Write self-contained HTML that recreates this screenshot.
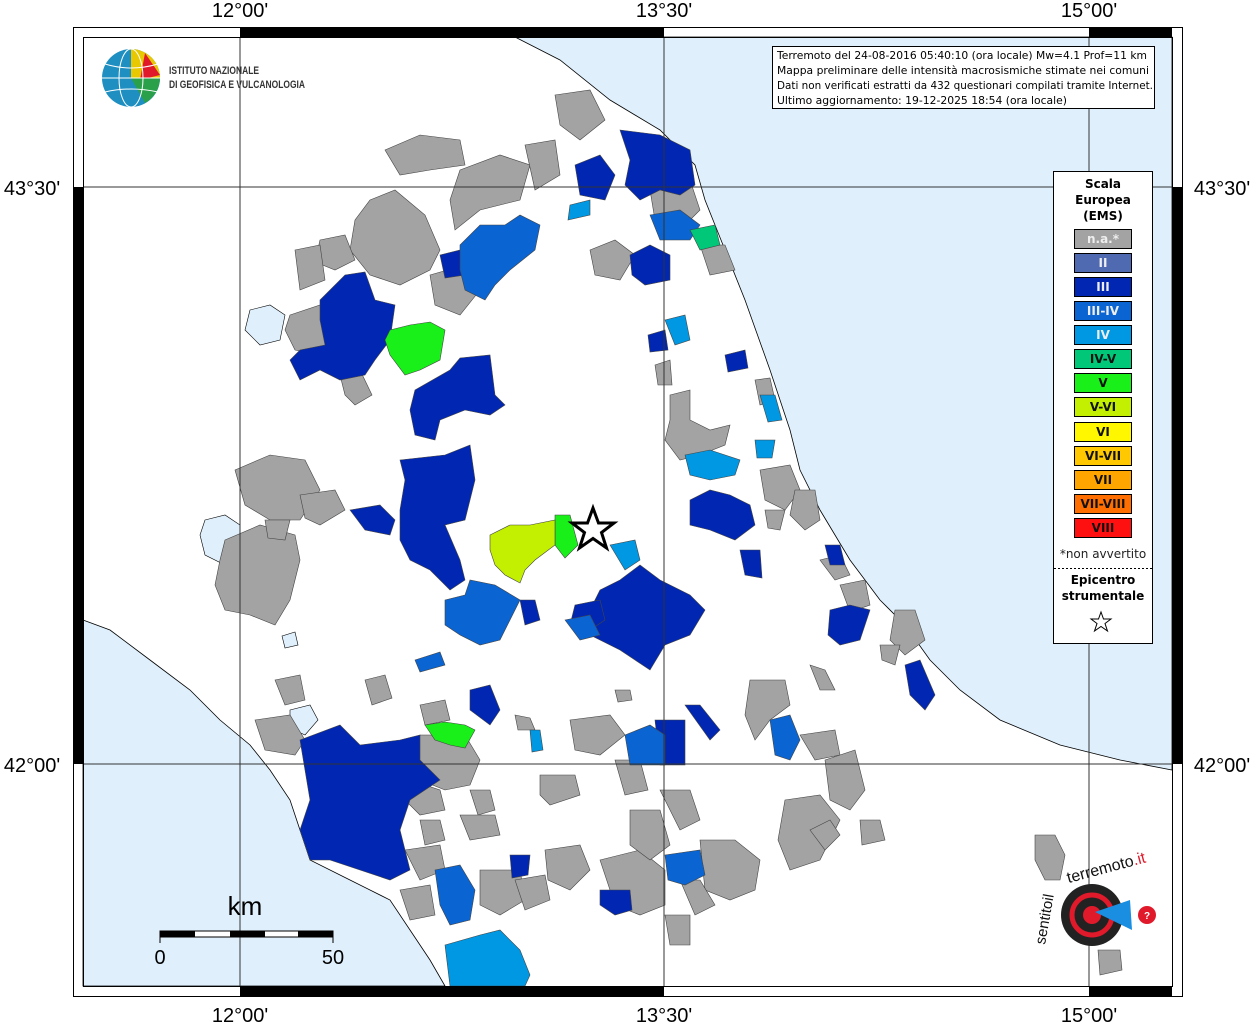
<!DOCTYPE html>
<html><head><meta charset="utf-8"><style>
html,body{margin:0;padding:0;background:#fff;}
body{width:1255px;height:1024px;position:relative;overflow:hidden;font-family:"Liberation Sans","DejaVu Sans",sans-serif;}
svg{position:absolute;left:0;top:0}
</style></head><body>
<svg width="1255" height="1024" viewBox="0 0 1255 1024" xmlns="http://www.w3.org/2000/svg">
<g font-family="Liberation Sans, DejaVu Sans, sans-serif">
<rect x="83" y="37" width="1089" height="949" fill="#fff"/>
<path d="M515,37 L560,60 L610,100 L660,130 L695,165 L705,200 L725,250 L745,300 L770,370 L790,430 L800,470 L820,510 L850,560 L880,600 L905,625 L930,660 L960,690 L1000,720 L1060,745 L1120,760 L1172,770 L1172,37 Z" fill="#dff0fc" stroke="#000" stroke-width="0.8"/>
<path d="M83,620 L110,630 L150,660 L190,690 L220,720 L250,745 L270,770 L290,800 L300,830 L310,860 L350,880 L390,900 L410,930 L430,960 L445,986 L83,986 Z" fill="#dff0fc" stroke="#000" stroke-width="0.8"/>
<path d="M250,310 L270,305 L285,315 L280,340 L260,345 L245,330 Z" fill="#dff0fc" stroke="#000" stroke-width="0.6"/>
<path d="M205,520 L225,515 L240,525 L240,555 L225,565 L205,555 L200,535 Z" fill="#dff0fc" stroke="#000" stroke-width="0.6"/>
<path d="M290,710 L310,705 L318,720 L305,735 L290,728 Z" fill="#dff0fc" stroke="#000" stroke-width="0.6"/>
<path d="M282,636 L295,632 L298,645 L285,648 Z" fill="#dff0fc" stroke="#000" stroke-width="0.6"/>

<g stroke="#444" stroke-width="0.6">
<g fill="#a3a3a3">
<path d="M555,95 L590,90 L605,120 L580,140 L560,125 Z"/>
<path d="M385,150 L420,135 L460,140 L465,165 L430,170 L400,175 Z"/>
<path d="M460,170 L500,155 L530,165 L520,200 L480,210 L455,230 L450,200 Z"/>
<path d="M525,145 L555,140 L560,175 L535,190 Z"/>
<path d="M370,200 L395,190 L425,215 L440,250 L430,270 L400,285 L370,275 L350,250 L355,220 Z"/>
<path d="M320,240 L345,235 L355,260 L335,270 L315,262 Z"/>
<path d="M295,250 L320,245 L325,280 L300,290 Z"/>
<path d="M290,315 L320,305 L335,330 L320,355 L295,350 L285,330 Z"/>
<path d="M430,275 L465,265 L480,290 L460,315 L435,305 Z"/>
<path d="M590,250 L615,240 L635,255 L620,280 L595,275 Z"/>
<path d="M650,190 L690,180 L700,210 L680,230 L655,220 Z"/>
<path d="M700,245 L725,245 L735,270 L710,275 Z"/>
<path d="M655,365 L670,360 L672,385 L658,385 Z"/>
<path d="M670,395 L690,390 L690,420 L710,430 L730,425 L725,445 L700,455 L680,460 L665,440 L670,420 Z"/>
<path d="M755,380 L770,378 L775,400 L760,405 Z"/>
<path d="M760,470 L790,465 L800,490 L785,510 L765,500 Z"/>
<path d="M795,490 L815,490 L820,520 L805,530 L790,515 Z"/>
<path d="M765,510 L785,510 L780,530 L768,528 Z"/>
<path d="M820,560 L840,555 L850,575 L835,580 Z"/>
<path d="M840,585 L865,580 L870,605 L850,612 Z"/>
<path d="M895,610 L915,610 L925,640 L905,655 L890,640 Z"/>
<path d="M880,645 L900,645 L895,665 L882,660 Z"/>
<path d="M810,665 L825,670 L835,690 L820,690 Z"/>
<path d="M750,680 L785,680 L790,705 L770,720 L755,740 L745,715 Z"/>
<path d="M800,735 L835,730 L840,755 L815,760 Z"/>
<path d="M825,760 L855,750 L865,790 L850,810 L830,800 Z"/>
<path d="M785,800 L820,795 L840,820 L820,860 L790,870 L778,840 Z"/>
<path d="M810,830 L830,820 L840,835 L825,850 Z"/>
<path d="M860,820 L880,820 L885,840 L862,845 Z"/>
<path d="M235,470 L270,455 L305,460 L320,490 L300,520 L270,520 L245,505 Z"/>
<path d="M300,495 L335,490 L345,510 L320,525 L305,518 Z"/>
<path d="M225,540 L260,525 L295,535 L300,560 L290,600 L275,625 L250,615 L225,610 L215,585 L220,560 Z"/>
<path d="M265,520 L290,520 L285,540 L268,538 Z"/>
<path d="M275,680 L300,675 L305,700 L285,705 Z"/>
<path d="M365,680 L385,675 L392,698 L372,705 Z"/>
<path d="M420,705 L445,700 L450,720 L425,725 Z"/>
<path d="M255,720 L290,715 L305,740 L295,755 L265,750 Z"/>
<path d="M420,735 L465,735 L480,760 L470,785 L445,790 L420,780 L415,755 Z"/>
<path d="M410,780 L440,790 L445,810 L420,815 L405,800 Z"/>
<path d="M470,790 L490,790 L495,810 L478,815 Z"/>
<path d="M460,815 L495,815 L500,835 L470,840 Z"/>
<path d="M420,820 L440,820 L445,840 L425,845 Z"/>
<path d="M405,850 L440,845 L445,870 L420,880 Z"/>
<path d="M480,870 L520,870 L525,900 L500,915 L480,905 Z"/>
<path d="M400,890 L430,885 L435,915 L410,920 Z"/>
<path d="M515,715 L530,718 L535,730 L518,730 Z"/>
<path d="M540,775 L575,775 L580,795 L550,805 L540,795 Z"/>
<path d="M570,720 L610,715 L625,735 L600,755 L575,750 Z"/>
<path d="M545,850 L580,845 L590,870 L570,890 L548,880 Z"/>
<path d="M515,880 L545,875 L550,900 L525,910 Z"/>
<path d="M600,860 L640,850 L665,870 L665,905 L640,915 L615,905 Z"/>
<path d="M630,810 L660,810 L670,845 L650,860 L630,845 Z"/>
<path d="M660,790 L690,790 L700,820 L680,830 Z"/>
<path d="M615,760 L640,760 L648,790 L625,795 Z"/>
<path d="M700,840 L735,840 L760,860 L755,890 L730,900 L705,890 Z"/>
<path d="M680,880 L700,880 L715,905 L695,915 Z"/>
<path d="M665,915 L690,915 L690,945 L670,945 Z"/>
<path d="M615,690 L630,690 L632,700 L618,702 Z"/>
<path d="M1035,835 L1055,835 L1065,855 L1060,880 L1045,880 L1035,860 Z"/>
<path d="M1098,950 L1120,950 L1122,970 L1100,975 Z"/>
<path d="M340,375 L360,370 L372,395 L355,405 L345,395 Z"/>
</g>
<g fill="#0026b2">
<path d="M320,300 L345,275 L365,272 L375,300 L395,305 L390,340 L375,360 L365,375 L340,380 L320,370 L300,380 L290,360 L300,350 L325,345 L320,320 Z"/>
<path d="M415,390 L450,370 L460,358 L490,355 L495,395 L505,405 L490,415 L465,410 L440,420 L435,440 L415,435 L410,410 Z"/>
<path d="M400,460 L445,455 L470,445 L475,480 L465,520 L445,525 L460,560 L465,580 L450,590 L430,570 L410,560 L400,540 L400,510 L405,480 Z"/>
<path d="M350,510 L380,505 L395,520 L390,535 L365,530 Z"/>
<path d="M600,590 L620,580 L640,565 L660,580 L690,595 L705,610 L690,635 L665,645 L650,670 L620,650 L600,640 L580,630 Z"/>
<path d="M575,605 L600,600 L605,620 L590,630 L570,625 Z"/>
<path d="M575,165 L600,155 L615,175 L605,200 L580,195 Z"/>
<path d="M620,130 L660,135 L690,150 L695,185 L680,195 L660,190 L640,200 L625,185 L630,160 Z"/>
<path d="M630,255 L650,245 L670,255 L670,280 L645,285 L632,275 Z"/>
<path d="M440,255 L460,250 L465,275 L445,278 Z"/>
<path d="M690,500 L710,490 L730,495 L750,505 L755,525 L735,540 L710,530 L690,525 Z"/>
<path d="M725,355 L745,350 L748,368 L728,372 Z"/>
<path d="M740,550 L760,550 L762,578 L745,575 Z"/>
<path d="M825,545 L840,545 L845,565 L830,565 Z"/>
<path d="M830,610 L850,605 L870,610 L860,640 L840,645 L828,635 Z"/>
<path d="M905,665 L920,660 L935,695 L925,710 L910,695 Z"/>
<path d="M470,690 L490,685 L500,710 L490,725 L470,710 Z"/>
<path d="M520,600 L535,600 L540,620 L525,625 Z"/>
<path d="M655,720 L685,720 L685,765 L660,765 Z"/>
<path d="M685,705 L700,705 L720,730 L710,740 Z"/>
<path d="M600,890 L630,890 L632,910 L615,915 L600,905 Z"/>
<path d="M510,855 L530,855 L528,875 L512,878 Z"/>
<path d="M300,740 L340,725 L360,745 L400,740 L420,735 L420,760 L440,780 L410,800 L400,830 L410,870 L390,880 L360,870 L330,860 L310,860 L300,830 L310,800 L305,770 Z"/>
<path d="M648,335 L665,330 L668,350 L650,352 Z"/>
</g>
<g fill="#0a64d2">
<path d="M460,245 L480,225 L505,225 L520,215 L540,225 L535,250 L510,270 L495,285 L485,300 L465,290 L460,270 Z"/>
<path d="M650,215 L680,210 L700,225 L690,240 L660,240 Z"/>
<path d="M445,600 L465,595 L470,580 L495,585 L520,600 L510,620 L500,640 L480,645 L460,635 L445,625 Z"/>
<path d="M565,620 L590,615 L600,635 L580,640 Z"/>
<path d="M625,735 L650,725 L665,735 L665,765 L630,765 Z"/>
<path d="M770,720 L790,715 L800,740 L790,760 L775,755 Z"/>
<path d="M665,855 L700,850 L705,875 L685,885 L668,880 Z"/>
<path d="M435,870 L460,865 L475,890 L470,920 L450,925 L440,905 Z"/>
<path d="M415,660 L440,652 L445,665 L420,672 Z"/>
</g>
<g fill="#0098e2">
<path d="M665,320 L685,315 L690,340 L675,345 Z"/>
<path d="M760,395 L775,395 L782,420 L768,422 Z"/>
<path d="M685,455 L710,450 L740,460 L735,475 L710,480 L690,475 Z"/>
<path d="M755,440 L775,440 L772,458 L757,458 Z"/>
<path d="M610,545 L635,540 L640,560 L625,570 Z"/>
<path d="M570,205 L590,200 L590,215 L568,220 Z"/>
<path d="M530,730 L540,730 L543,750 L532,752 Z"/>
<path d="M445,945 L480,935 L500,930 L520,950 L530,975 L525,986 L450,986 Z"/>
</g>
<path d="M690,230 L715,225 L720,245 L700,250 Z" fill="#00c878"/>
<path d="M390,330 L410,325 L430,322 L445,330 L440,360 L420,370 L405,375 L390,355 L385,340 Z" fill="#19f019"/>
<path d="M555,515 L570,515 L578,545 L565,558 L555,545 Z" fill="#19f019"/>
<path d="M425,725 L445,722 L465,725 L475,730 L465,748 L450,745 L435,740 Z" fill="#19f019"/>
<path d="M490,535 L510,525 L530,525 L555,520 L555,545 L535,560 L525,570 L520,583 L505,575 L495,565 L490,550 Z" fill="#c2f000"/>
</g>
<g stroke="#333" stroke-width="1" fill="none">
<line x1="240" y1="37" x2="240" y2="986"/><line x1="664" y1="37" x2="664" y2="986"/><line x1="1089" y1="37" x2="1089" y2="986"/>
<line x1="83" y1="187" x2="1172" y2="187"/><line x1="83" y1="764" x2="1172" y2="764"/>
</g>
<rect x="73.5" y="27.5" width="1109" height="969" fill="none" stroke="#000" stroke-width="1"/>
<rect x="83.5" y="37.5" width="1089" height="949" fill="none" stroke="#000" stroke-width="1"/>
<g fill="#000">
<rect x="240" y="27" width="424" height="10"/><rect x="1089" y="27" width="83" height="10"/>
<rect x="240" y="986" width="424" height="10"/><rect x="1089" y="986" width="83" height="10"/>
<rect x="73" y="187" width="10" height="577"/><rect x="1172" y="187" width="10" height="577"/>
</g>
<g font-size="20" fill="#000" text-anchor="middle">
<text x="240" y="17">12°00'</text><text x="664" y="17">13°30'</text><text x="1089" y="17">15°00'</text>
<text x="240" y="1022">12°00'</text><text x="664" y="1022">13°30'</text><text x="1089" y="1022">15°00'</text>
<text x="32" y="195">43°30'</text><text x="32" y="772">42°00'</text>
<text x="1222" y="195">43°30'</text><text x="1222" y="772">42°00'</text>
</g>
<circle cx="131" cy="78" r="29" fill="#1e8fc0"/>
<path d="M131,49 A29,29 0 0,1 160,78 L131,78 Z" fill="#e8c800"/>
<path d="M145,53 L160,75 L140,80 Z" fill="#e01a2a"/>
<path d="M131,78 L160,78 A29,29 0 0,1 145,103 Z" fill="#2aa04a"/>
<g stroke="#fff" stroke-width="1" fill="none"><ellipse cx="131" cy="78" rx="12" ry="29"/><line x1="102" y1="78" x2="160" y2="78"/><path d="M105,64 Q131,72 158,64"/><path d="M105,92 Q131,86 158,92"/></g>
<text x="169" y="74" font-size="11" fill="#333" textLength="90" lengthAdjust="spacingAndGlyphs" font-weight="bold">ISTITUTO NAZIONALE</text>
<text x="169" y="88" font-size="11" fill="#333" textLength="136" lengthAdjust="spacingAndGlyphs" font-weight="bold">DI GEOFISICA E VULCANOLOGIA</text>
<rect x="772.5" y="46.5" width="382" height="62" fill="#fff" stroke="#000"/>
<g font-size="11" fill="#000" font-family="DejaVu Sans, sans-serif">
<text x="777" y="59" textLength="370" lengthAdjust="spacingAndGlyphs">Terremoto del 24-08-2016 05:40:10 (ora locale) Mw=4.1 Prof=11 km</text>
<text x="777" y="74" textLength="372" lengthAdjust="spacingAndGlyphs">Mappa preliminare delle intensità macrosismiche stimate nei comuni</text>
<text x="777" y="89" textLength="376" lengthAdjust="spacingAndGlyphs">Dati non verificati estratti da 432 questionari compilati tramite Internet.</text>
<text x="777" y="104" textLength="290" lengthAdjust="spacingAndGlyphs">Ultimo aggiornamento: 19-12-2025 18:54 (ora locale)</text>
</g>
<rect x="1053.5" y="171.5" width="99" height="472" fill="#fff" stroke="#000"/>
<g font-size="12" font-weight="bold" text-anchor="middle" fill="#000" font-family="DejaVu Sans, sans-serif">
<text x="1103" y="188">Scala</text><text x="1103" y="204">Europea</text><text x="1103" y="220">(EMS)</text>
</g>
<g stroke="#000" stroke-width="1">
<rect x="1074.5" y="229.5" width="57" height="19" fill="#a3a3a3"/>
<rect x="1074.5" y="253.5" width="57" height="19" fill="#4f6ab0"/>
<rect x="1074.5" y="277.5" width="57" height="19" fill="#0026b2"/>
<rect x="1074.5" y="301.5" width="57" height="19" fill="#0a64d2"/>
<rect x="1074.5" y="325.5" width="57" height="19" fill="#0098e2"/>
<rect x="1074.5" y="349.5" width="57" height="19" fill="#00c878"/>
<rect x="1074.5" y="373.5" width="57" height="19" fill="#19f019"/>
<rect x="1074.5" y="397.5" width="57" height="19" fill="#c2f000"/>
<rect x="1074.5" y="422.5" width="57" height="19" fill="#fff700"/>
<rect x="1074.5" y="446.5" width="57" height="19" fill="#ffc800"/>
<rect x="1074.5" y="470.5" width="57" height="19" fill="#ffa500"/>
<rect x="1074.5" y="494.5" width="57" height="19" fill="#ff6e00"/>
<rect x="1074.5" y="518.5" width="57" height="19" fill="#ff1010"/>
</g>
<g font-size="12" font-weight="bold" text-anchor="middle" font-family="DejaVu Sans, sans-serif">
<text x="1103" y="243" fill="#eee">n.a.*</text>
<text x="1103" y="267" fill="#eee">II</text>
<text x="1103" y="291" fill="#eee">III</text>
<text x="1103" y="315" fill="#eee">III-IV</text>
<text x="1103" y="339" fill="#eee">IV</text>
<text x="1103" y="363" fill="#111">IV-V</text>
<text x="1103" y="387" fill="#111">V</text>
<text x="1103" y="411" fill="#111">V-VI</text>
<text x="1103" y="436" fill="#111">VI</text>
<text x="1103" y="460" fill="#111">VI-VII</text>
<text x="1103" y="484" fill="#111">VII</text>
<text x="1103" y="508" fill="#111">VII-VIII</text>
<text x="1103" y="532" fill="#111">VIII</text>
</g>
<text x="1103" y="558" font-size="12" text-anchor="middle" fill="#222" font-family="DejaVu Sans, sans-serif">*non avvertito</text>
<line x1="1054" y1="568.5" x2="1152" y2="568.5" stroke="#000" stroke-dasharray="2,2"/>
<g font-size="12" font-weight="bold" text-anchor="middle" font-family="DejaVu Sans, sans-serif"><text x="1103" y="584">Epicentro</text><text x="1103" y="600">strumentale</text></g>
<path d="M1101,612 L1103.5,619 L1111,619 L1105,623.5 L1107.5,631 L1101,626.5 L1094.5,631 L1097,623.5 L1091,619 L1098.5,619 Z" fill="#fff" stroke="#000"/>
<path d="M593,508 L598.5,523 L614,523 L601.5,532.5 L606.5,548 L593,538.5 L579.5,548 L584.5,532.5 L572,523 L587.5,523 Z" fill="#fff" stroke="#000" stroke-width="3"/>
<text x="245" y="915" font-size="26" text-anchor="middle">km</text>
<rect x="160" y="931" width="173" height="6" fill="#fff" stroke="#000"/>
<rect x="160" y="931" width="35" height="6" fill="#000"/><rect x="230" y="931" width="35" height="6" fill="#000"/><rect x="298" y="931" width="35" height="6" fill="#000"/>
<line x1="160" y1="931" x2="160" y2="943" stroke="#000"/><line x1="333" y1="931" x2="333" y2="943" stroke="#000"/>
<text x="160" y="964" font-size="20" text-anchor="middle">0</text><text x="333" y="964" font-size="20" text-anchor="middle">50</text>
<circle cx="1092" cy="915" r="31" fill="#222"/>
<circle cx="1092" cy="915" r="20" fill="none" stroke="#e01a2a" stroke-width="5"/>
<circle cx="1092" cy="915" r="9" fill="#e01a2a"/>
<path d="M1095,912 L1130,900 L1132,930 Z" fill="#1a8ee0"/>
<circle cx="1147" cy="915" r="9" fill="#e01a2a"/>
<text x="1147" y="919" font-size="10" fill="#fff" text-anchor="middle" font-weight="bold">?</text>
<text x="1068" y="880" font-size="16" fill="#111" transform="rotate(-15 1080 880)">terremoto<tspan fill="#e01a2a">.it</tspan></text>
<text x="1045" y="945" font-size="15" fill="#111" transform="rotate(-80 1045 945)">sentitoil</text>
</g>
</svg>
</body></html>
